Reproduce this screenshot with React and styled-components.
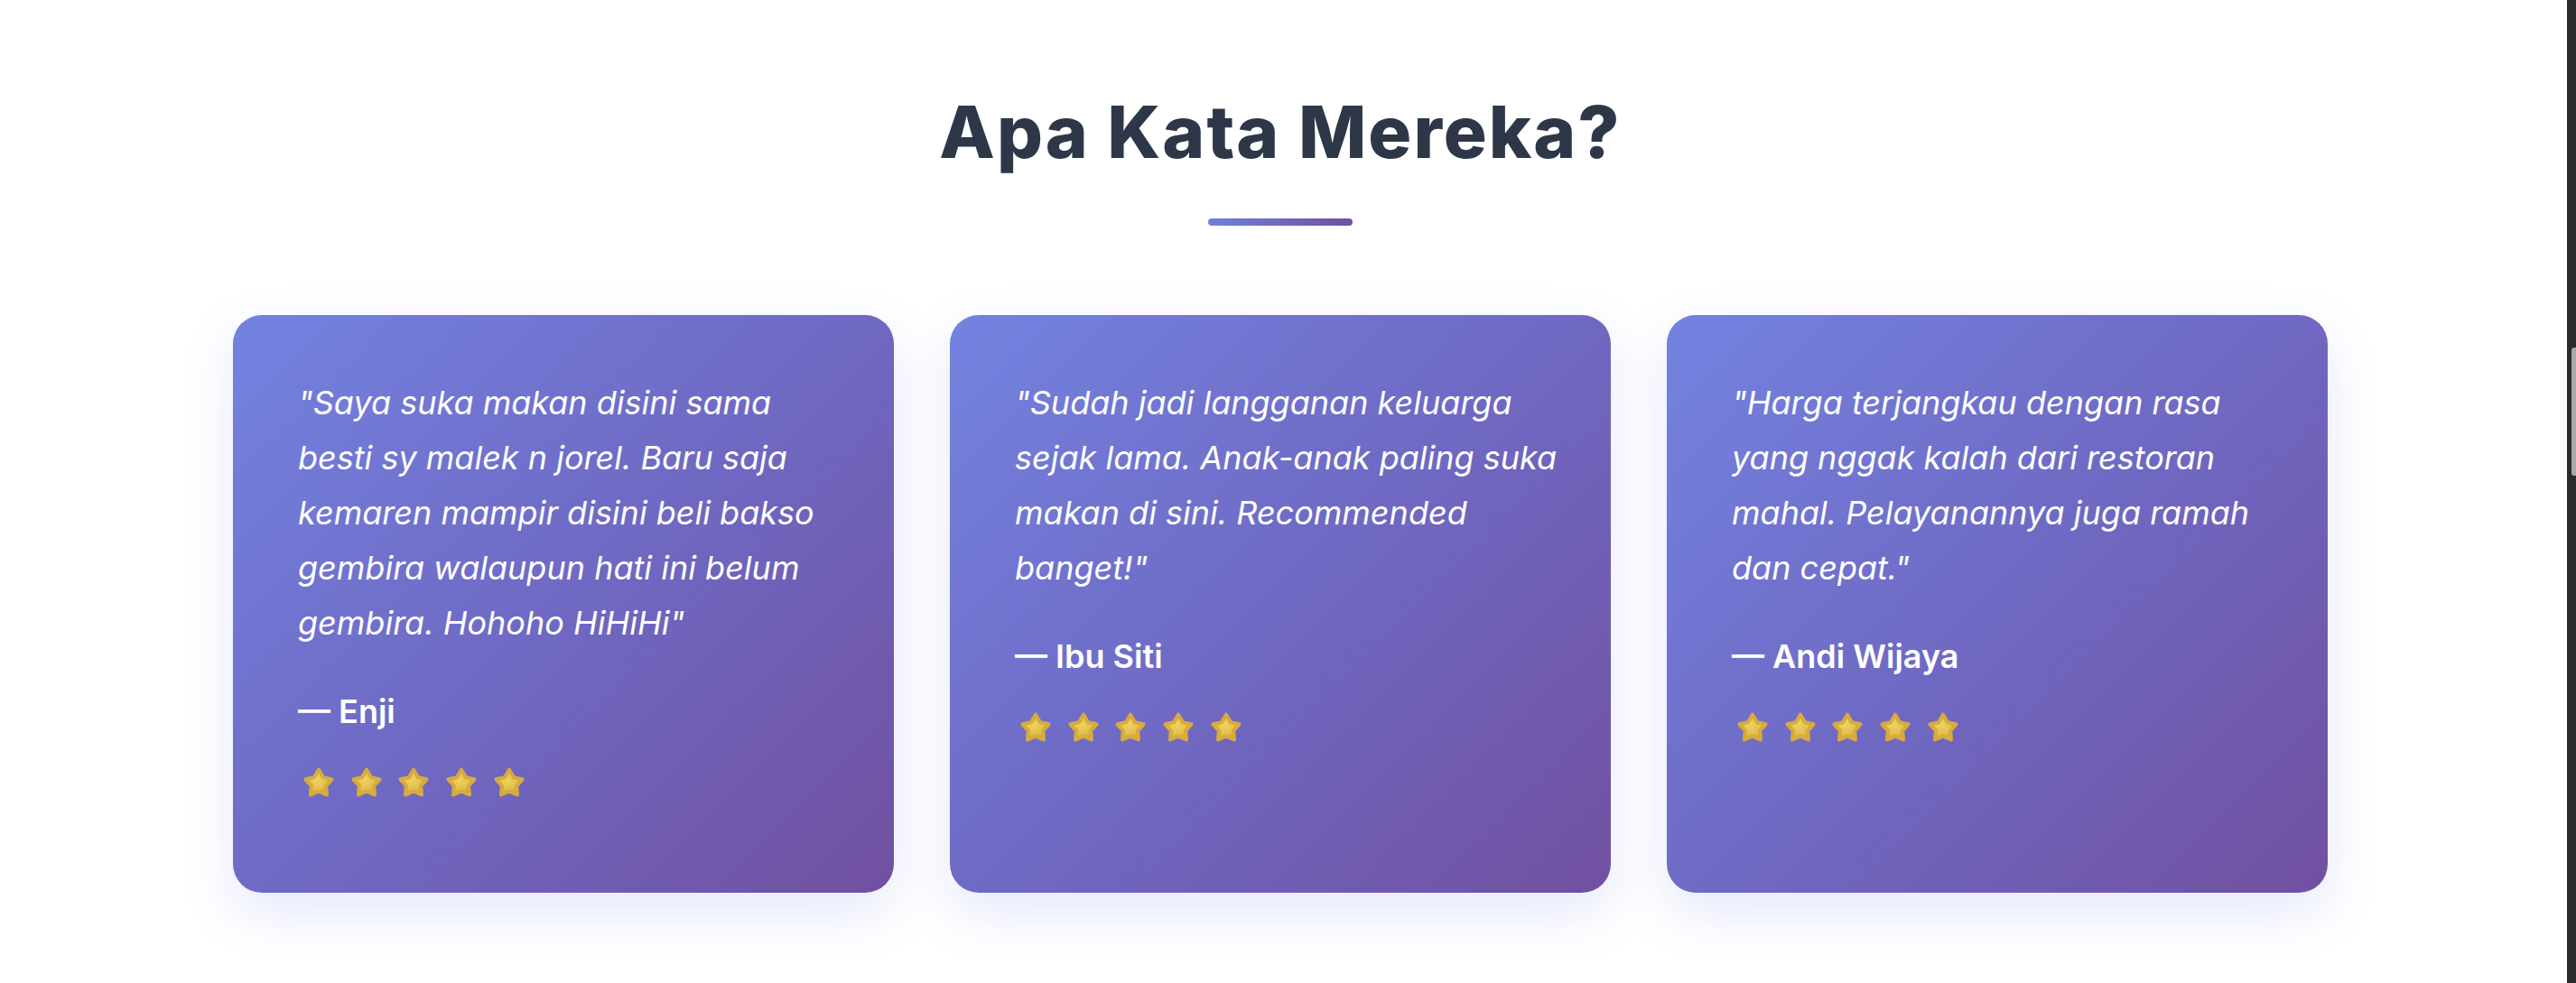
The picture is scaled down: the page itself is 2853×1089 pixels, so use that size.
import React from "react";
import styled, { createGlobalStyle } from "styled-components";

const testimonials = [
  {
    quote:
      '"Saya suka makan disini sama besti sy malek n jorel. Baru saja kemaren mampir disini beli bakso gembira walaupun hati ini belum gembira. Hohoho HiHiHi"',
    name: "Enji",
    rating: 5,
  },
  {
    quote:
      '"Sudah jadi langganan keluarga sejak lama. Anak-anak paling suka makan di sini. Recommended banget!"',
    name: "Ibu Siti",
    rating: 5,
  },
  {
    quote:
      '"Harga terjangkau dengan rasa yang nggak kalah dari restoran mahal. Pelayanannya juga ramah dan cepat."',
    name: "Andi Wijaya",
    rating: 5,
  },
];

// chubby rounded star, like the 3D emoji in the design
const Star = () => (
  <StarIcon viewBox="0 0 40 40" aria-hidden="true">
    <defs>
      <radialGradient id="starFill" cx="42%" cy="38%" r="62%">
        <stop offset="0%" stopColor="#efd35f" />
        <stop offset="65%" stopColor="#e4c04d" />
        <stop offset="100%" stopColor="#cd9d33" />
      </radialGradient>
    </defs>
    <path
      d="M20 5 L25.3 13.9 L35.2 16.1 L28.5 23.9 L29.4 34.1 L20 30 L10.6 34.1 L11.5 23.9 L4.8 16.1 L14.7 13.9 Z"
      fill="url(#starFill)"
      stroke="#d7ab3d"
      strokeWidth="4.4"
      strokeLinejoin="round"
    />
  </StarIcon>
);

const App = () => {
  return (
    <Page>
      <GlobalStyle />
      <Main>
        <Section>
          <Title>Apa Kata Mereka?</Title>
          <Underline />
          <Grid>
            {testimonials.map((t) => (
              <Card key={t.name}>
                <Quote>{t.quote}</Quote>
                <Name>— {t.name}</Name>
                <Stars>
                  {Array.from({ length: t.rating }).map((_, i) => (
                    <Star key={i} />
                  ))}
                </Stars>
              </Card>
            ))}
          </Grid>
        </Section>
      </Main>
      <ScrollTrack>
        <ScrollThumb />
      </ScrollTrack>
    </Page>
  );
};

const GlobalStyle = createGlobalStyle`
  html, body {
    margin: 0;
    padding: 0;
    background: #ffffff;
    overflow: hidden;
  }
  body {
    font-family: "Inter", "Noto Sans", sans-serif;
  }
`;

const Page = styled.div`
  display: flex;
  min-height: 100vh;
`;

const Main = styled.main`
  flex: 1;
  padding-right: 7px;
`;

const Section = styled.section`
  display: flex;
  flex-direction: column;
  align-items: center;
  padding: 98px 0 100px;
`;

const Title = styled.h2`
  margin: 0;
  font-size: 80px;
  line-height: 96px;
  font-weight: 800;
  letter-spacing: 2px;
  color: #2d3748;
`;

const Underline = styled.div`
  width: 160px;
  height: 8px;
  margin-top: 48px;
  border-radius: 4px;
  background: linear-gradient(90deg, #6f80de 0%, #7150a0 100%);
`;

const Grid = styled.div`
  display: grid;
  grid-template-columns: repeat(3, 1fr);
  gap: 62px;
  width: 2320px;
  margin-top: 99px;
`;

const Card = styled.div`
  display: flex;
  flex-direction: column;
  padding: 67px 52px 103px 72px;
  border-radius: 32px;
  background: linear-gradient(135deg, #7383e0 0%, #6f69c3 50%, #7150a0 100%);
  box-shadow: 0 22px 55px rgba(102, 116, 234, 0.17);
  color: #ffffff;
`;

const Quote = styled.p`
  margin: 0;
  font-size: 36px;
  line-height: 61px;
  font-style: italic;
  font-weight: 400;
`;

const Name = styled.div`
  margin-top: 40px;
  font-size: 36px;
  line-height: 54px;
  font-weight: 600;
`;

const Stars = styled.div`
  display: flex;
  gap: 14.7px;
  margin-top: 33px;
  padding-left: 4px;
`;

const StarIcon = styled.svg`
  width: 38px;
  height: 38px;
  display: block;
`;

const ScrollTrack = styled.div`
  width: 10px;
  flex-shrink: 0;
  background: #2b2b2b;
  display: flex;
  flex-direction: column;
  align-items: flex-end;
  padding-top: 385px;
`;

const ScrollThumb = styled.div`
  width: 5px;
  height: 142px;
  border-radius: 3px 0 0 3px;
  background: #a8a8a8;
`;

export default App;
